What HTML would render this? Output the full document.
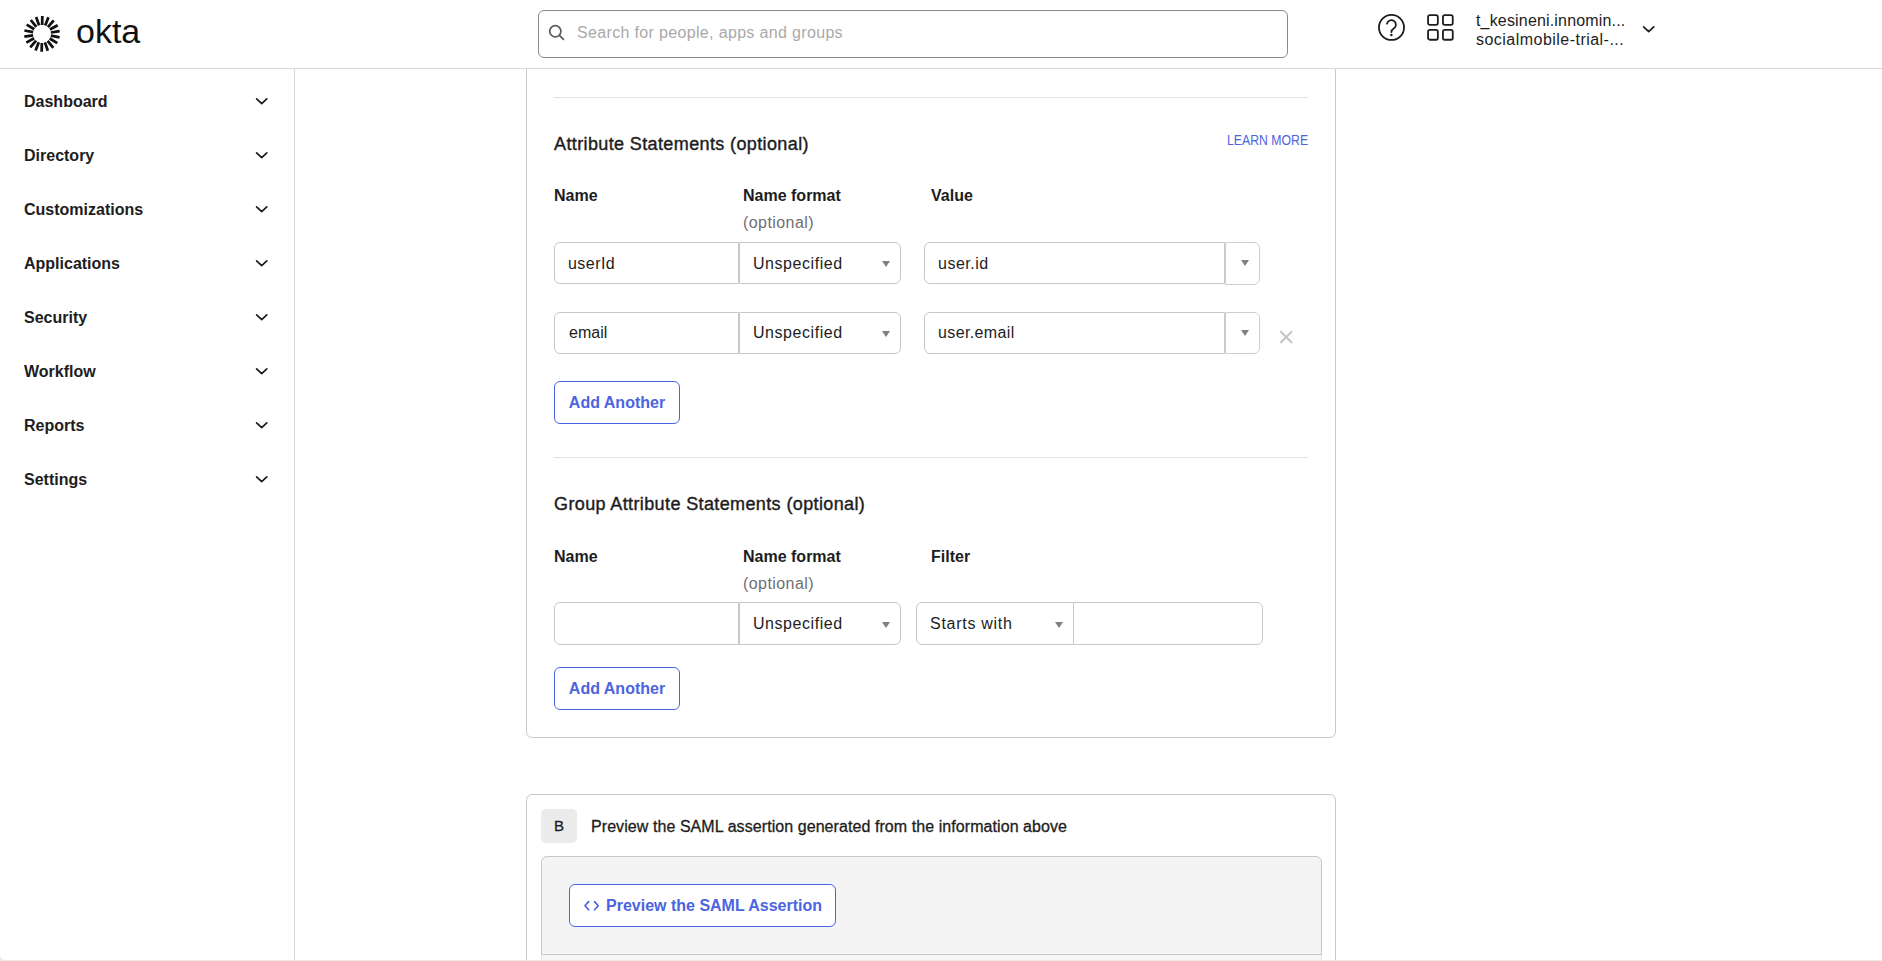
<!DOCTYPE html>
<html lang="en">
<head>
<meta charset="utf-8">
<title>Okta Admin - SAML Settings</title>
<style>
*{box-sizing:border-box;margin:0;padding:0}
html,body{width:1882px;height:961px;overflow:hidden;background:#fff}
body{font-family:"Liberation Sans",sans-serif;color:#1d1d21;position:relative}
.abs{position:absolute}
.t{position:absolute;white-space:nowrap;line-height:1}
/* header */
#hdr{position:absolute;left:0;top:0;width:1882px;height:69px;border-bottom:1px solid #d7d7dc;background:#fff}
#search{position:absolute;left:538px;top:10px;width:750px;height:48px;border:1px solid #8a8a8a;border-radius:6px;background:#fff}
/* sidebar */
#side{position:absolute;left:0;top:69px;width:295px;height:892px;border-right:1px solid #d7d7dc;background:#fff}
.nav{position:absolute;left:24px;font-weight:bold;font-size:16px;line-height:20px;white-space:nowrap;color:#1d1d21}
.chev{position:absolute;left:255px;width:14px;height:9px}
/* cards */
.card{position:absolute;border:1px solid #cacaca;background:#fff}
.hr{position:absolute;left:554px;width:754px;height:1px;background:#e2e2e2}
.h3{position:absolute;left:554px;font-size:18px;line-height:22px;white-space:nowrap;color:#1d1d21;-webkit-text-stroke:0.4px #1d1d21;letter-spacing:0.38px}
.lbl{position:absolute;font-weight:bold;font-size:16px;line-height:20px;white-space:nowrap;color:#1d1d21}
.opt{position:absolute;font-size:16px;line-height:20px;white-space:nowrap;color:#6f6f72;letter-spacing:0.43px}
.box{position:absolute;height:42px;border:1px solid #c8c8c8;background:#fff}
.val{position:absolute;font-size:16px;line-height:20px;white-space:nowrap;color:#1d1d21}
.tri{position:absolute;width:0;height:0;border-left:4px solid transparent;border-right:4px solid transparent;border-top:6px solid #808080}
.btn{position:absolute;height:43px;border:1px solid #4c64e1;border-radius:6px;background:#fff;color:#4c64e1;font-weight:bold;font-size:16px;line-height:41px;white-space:nowrap;text-align:center}
</style>
</head>
<body>

<!-- ===== main content ===== -->
<div id="main">
  <div class="card" style="left:526px;top:-20px;width:810px;height:758px;border-radius:0 0 6px 6px"></div>
  <div class="hr" style="top:97px"></div>
  <div class="h3" style="top:133px">Attribute Statements (optional)</div>
  <div class="t" style="right:574px;top:132px;font-size:14px;line-height:16px;color:#4c64e1;transform:translateX(0.5px) scaleX(0.876);transform-origin:100% 50%">LEARN MORE</div>

  <div class="lbl" style="left:554px;top:186px">Name</div>
  <div class="lbl" style="left:743px;top:186px">Name format</div>
  <div class="opt" style="left:743px;top:213px">(optional)</div>
  <div class="lbl" style="left:931px;top:186px">Value</div>

  <!-- row 1 -->
  <div class="box" style="left:554px;top:242px;width:185px;border-radius:6px 0 0 6px"></div>
  <div class="val" style="left:568px;top:254px;letter-spacing:0.46px">userId</div>
  <div class="box" style="left:739px;top:242px;width:162px;border-radius:0 6px 6px 0"></div>
  <div class="val" style="left:753px;top:254px;letter-spacing:0.55px">Unspecified</div>
  <div class="tri" style="left:882px;top:261px"></div>
  <div class="box" style="left:924px;top:242px;width:301px;border-radius:6px 0 0 6px"></div>
  <div class="val" style="left:938px;top:254px;letter-spacing:0.5px">user.id</div>
  <div class="box" style="left:1225px;top:242px;width:35px;height:43px;border-radius:0 6px 6px 0;border-color:#cfcfcf"></div>
  <div class="tri" style="left:1241px;top:260px"></div>

  <!-- row 2 -->
  <div class="box" style="left:554px;top:312px;width:185px;border-radius:6px 0 0 6px"></div>
  <div class="val" style="left:569px;top:323px">email</div>
  <div class="box" style="left:739px;top:312px;width:162px;border-radius:0 6px 6px 0"></div>
  <div class="val" style="left:753px;top:323px;letter-spacing:0.55px">Unspecified</div>
  <div class="tri" style="left:882px;top:331px"></div>
  <div class="box" style="left:924px;top:312px;width:301px;border-radius:6px 0 0 6px"></div>
  <div class="val" style="left:938px;top:323px;letter-spacing:0.37px">user.email</div>
  <div class="box" style="left:1225px;top:312px;width:35px;height:42px;border-radius:0 6px 6px 0;border-color:#cfcfcf"></div>
  <div class="tri" style="left:1241px;top:330px"></div>
  <svg class="abs" style="left:1279px;top:330.4px" width="15" height="15" viewBox="0 0 15 15"><path d="M1.3 1.3 L13.1 13.1 M13.1 1.3 L1.3 13.1" stroke="#c6c6c6" stroke-width="2.1" fill="none"/></svg>

  <div class="btn" style="left:554px;top:381px;width:126px">Add Another</div>

  <div class="hr" style="top:457px"></div>
  <div class="h3" style="top:493px">Group Attribute Statements (optional)</div>

  <div class="lbl" style="left:554px;top:547px">Name</div>
  <div class="lbl" style="left:743px;top:547px">Name format</div>
  <div class="opt" style="left:743px;top:574px">(optional)</div>
  <div class="lbl" style="left:931px;top:547px">Filter</div>

  <div class="box" style="left:554px;top:602px;width:185px;height:43px;border-radius:6px 0 0 6px"></div>
  <div class="box" style="left:739px;top:602px;width:162px;height:43px;border-radius:0 6px 6px 0"></div>
  <div class="val" style="left:753px;top:614px;letter-spacing:0.55px">Unspecified</div>
  <div class="tri" style="left:882px;top:622px"></div>
  <div class="box" style="left:916px;top:602px;width:158px;height:43px;border-radius:6px 0 0 6px"></div>
  <div class="val" style="left:930px;top:614px;letter-spacing:0.72px">Starts with</div>
  <div class="tri" style="left:1055px;top:622px"></div>
  <div class="box" style="left:1073px;top:602px;width:190px;height:43px;border-radius:0 6px 6px 0"></div>

  <div class="btn" style="left:554px;top:667px;width:126px">Add Another</div>

  <!-- card B -->
  <div class="card" style="left:526px;top:794px;width:810px;height:200px;border-radius:6px 6px 0 0"></div>
  <div class="abs" style="left:541px;top:809px;width:36px;height:34px;border-radius:5px;background:#ebebeb"></div>
  <div class="t" style="left:541px;width:36px;text-align:center;top:818px;font-size:15px;line-height:16px;-webkit-text-stroke:0.3px #1d1d21">B</div>
  <div class="t" style="left:591px;top:817px;font-size:16px;line-height:20px;letter-spacing:0.07px;-webkit-text-stroke:0.3px #1d1d21">Preview the SAML assertion generated from the information above</div>
  <div class="abs" style="left:541px;top:955px;width:781px;height:20px;border:1px solid #e6e6e6;border-top:0;background:#f6f6f6"></div>
  <div class="abs" style="left:541px;top:856px;width:781px;height:99px;border:1px solid #c8c8c8;border-radius:6px 6px 0 0;background:#f4f4f4"></div>
  <div class="btn" style="left:569px;top:884px;width:267px;text-align:left;padding-left:36px">Preview the SAML Assertion</div>
  <svg class="abs" style="left:583px;top:900px" width="17" height="12" viewBox="0 0 17 12"><path d="M5.6 1.6 L2 5.7 L5.6 9.8 M11.6 1.6 L15.2 5.7 L11.6 9.8" stroke="#4c64e1" stroke-width="1.7" fill="none" stroke-linecap="round" stroke-linejoin="round"/></svg>
</div>

<!-- ===== sidebar ===== -->
<div id="side">
  <div class="nav" style="top:23px">Dashboard</div>
  <svg class="chev" style="top:28px" viewBox="0 0 14 9"><path d="M1.6 1.9 L6.7 6.7 L11.8 1.9" stroke="#1d1d21" stroke-width="1.7" fill="none" stroke-linecap="round" stroke-linejoin="round"/></svg>
  <div class="nav" style="top:77px">Directory</div>
  <svg class="chev" style="top:82px" viewBox="0 0 14 9"><path d="M1.6 1.9 L6.7 6.7 L11.8 1.9" stroke="#1d1d21" stroke-width="1.7" fill="none" stroke-linecap="round" stroke-linejoin="round"/></svg>
  <div class="nav" style="top:131px">Customizations</div>
  <svg class="chev" style="top:136px" viewBox="0 0 14 9"><path d="M1.6 1.9 L6.7 6.7 L11.8 1.9" stroke="#1d1d21" stroke-width="1.7" fill="none" stroke-linecap="round" stroke-linejoin="round"/></svg>
  <div class="nav" style="top:185px">Applications</div>
  <svg class="chev" style="top:190px" viewBox="0 0 14 9"><path d="M1.6 1.9 L6.7 6.7 L11.8 1.9" stroke="#1d1d21" stroke-width="1.7" fill="none" stroke-linecap="round" stroke-linejoin="round"/></svg>
  <div class="nav" style="top:239px">Security</div>
  <svg class="chev" style="top:244px" viewBox="0 0 14 9"><path d="M1.6 1.9 L6.7 6.7 L11.8 1.9" stroke="#1d1d21" stroke-width="1.7" fill="none" stroke-linecap="round" stroke-linejoin="round"/></svg>
  <div class="nav" style="top:293px">Workflow</div>
  <svg class="chev" style="top:298px" viewBox="0 0 14 9"><path d="M1.6 1.9 L6.7 6.7 L11.8 1.9" stroke="#1d1d21" stroke-width="1.7" fill="none" stroke-linecap="round" stroke-linejoin="round"/></svg>
  <div class="nav" style="top:347px">Reports</div>
  <svg class="chev" style="top:352px" viewBox="0 0 14 9"><path d="M1.6 1.9 L6.7 6.7 L11.8 1.9" stroke="#1d1d21" stroke-width="1.7" fill="none" stroke-linecap="round" stroke-linejoin="round"/></svg>
  <div class="nav" style="top:401px">Settings</div>
  <svg class="chev" style="top:406px" viewBox="0 0 14 9"><path d="M1.6 1.9 L6.7 6.7 L11.8 1.9" stroke="#1d1d21" stroke-width="1.7" fill="none" stroke-linecap="round" stroke-linejoin="round"/></svg>
</div>

<!-- ===== header ===== -->
<div id="hdr">
  <svg class="abs" style="left:0;top:0" width="70" height="68" viewBox="0 0 70 68"><path d="M42.16 24.90L42.31 16.00M45.23 25.50L48.41 17.19M47.90 27.11L53.74 20.39M49.87 29.54L57.66 25.22M50.89 32.49L59.68 31.10M50.83 35.62L59.57 37.32M49.71 38.54L57.34 43.12M47.66 40.89L53.26 47.81M44.93 42.41L47.83 50.82M41.84 42.90L41.69 51.80M38.77 42.30L35.59 50.61M36.10 40.69L30.26 47.41M34.13 38.26L26.34 42.58M33.11 35.31L24.32 36.70M33.17 32.18L24.43 30.48M34.29 29.26L26.66 24.68M36.34 26.91L30.74 19.99M39.07 25.39L36.17 16.98" stroke="#111" stroke-width="2.75" fill="none"/></svg>
  <div class="t" style="left:76px;top:11px;font-size:34px;line-height:40px;color:#111">okta</div>
  <div id="search"></div>
  <svg class="abs" style="left:547.4px;top:23.4px" width="20" height="20" viewBox="0 0 20 20"><circle cx="8.3" cy="8.3" r="5.6" stroke="#5c5c5c" stroke-width="1.7" fill="none"/><path d="M12.4 12.4 L16.4 16.4" stroke="#5c5c5c" stroke-width="1.7" stroke-linecap="round"/></svg>
  <div class="t" style="left:577px;top:23px;font-size:16px;line-height:20px;color:#a9a9a9;letter-spacing:0.34px">Search for people, apps and groups</div>
  <svg class="abs" style="left:1376px;top:12px" width="31" height="31" viewBox="0 0 31 31"><circle cx="15.5" cy="15.4" r="12.55" stroke="#1d1d21" stroke-width="1.8" fill="none"/><path d="M11 11.7 A4.5 4.5 0 1 1 18.3 16.1 C16.6 17.2 15.4 17.8 15.4 20.1" stroke="#1d1d21" stroke-width="1.8" fill="none" stroke-linecap="round"/><circle cx="15.4" cy="23" r="1.25" fill="#1d1d21"/></svg>
  <svg class="abs" style="left:1426px;top:13px" width="30" height="30" viewBox="0 0 30 30"><g stroke="#1d1d21" stroke-width="1.8" fill="none"><rect x="2.05" y="2.05" width="9.8" height="9.8" rx="1.8"/><rect x="16.95" y="2.05" width="9.8" height="9.8" rx="1.8"/><rect x="2.05" y="16.95" width="9.8" height="9.8" rx="1.8"/><rect x="16.95" y="16.95" width="9.8" height="9.8" rx="1.8"/></g></svg>
  <div class="t" style="left:1476px;top:11px;font-size:16px;line-height:20px;letter-spacing:0.17px">t_kesineni.innomin...</div>
  <div class="t" style="left:1476px;top:30px;font-size:16px;line-height:20px;letter-spacing:0.47px">socialmobile-trial-...</div>
  <svg class="abs" style="left:1642px;top:25px" width="14" height="9" viewBox="0 0 14 9"><path d="M1.6 1.9 L6.7 6.7 L11.8 1.9" stroke="#1d1d21" stroke-width="1.7" fill="none" stroke-linecap="round" stroke-linejoin="round"/></svg>
</div>

<div class="abs" style="left:0;top:960px;width:1882px;height:1px;background:#ebebeb"></div>
<div class="abs" style="left:0;top:954px;width:6px;height:6px;background:#ebebeb"></div>
<div class="abs" style="left:0;top:954px;width:6px;height:6px;background:#fff;border-bottom-left-radius:6px"></div>
</body>
</html>
